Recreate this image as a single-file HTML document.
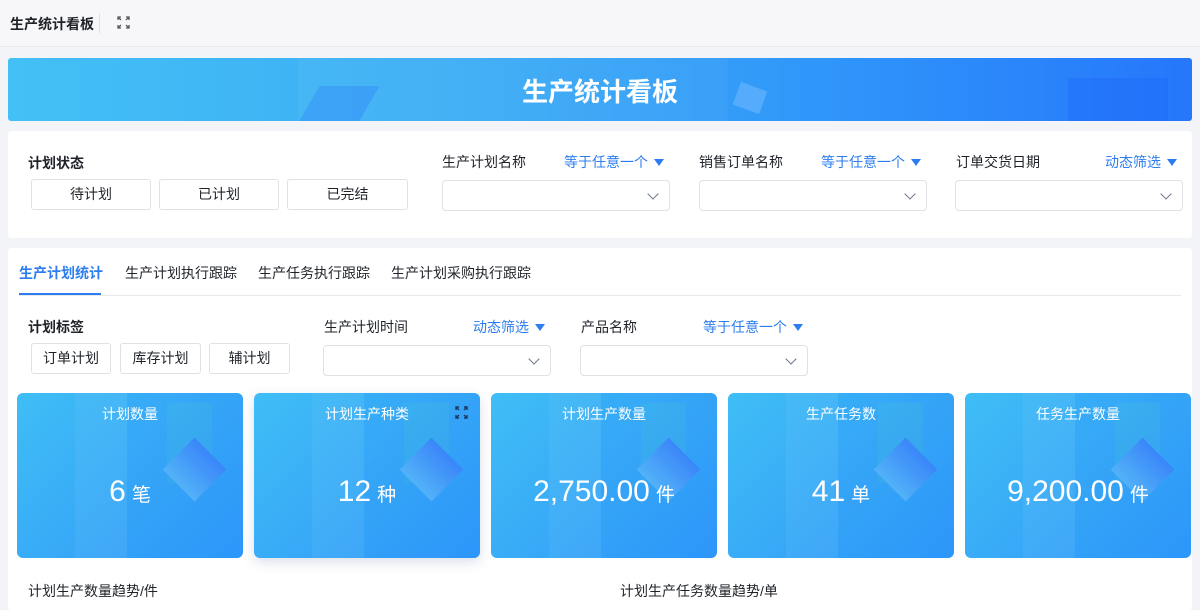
<!DOCTYPE html>
<html><head><meta charset="utf-8"><style>
*{box-sizing:border-box;margin:0;padding:0}
html,body{width:1200px;height:610px;overflow:hidden}
body{background:#f3f4f8;font-family:"Liberation Sans","Noto Sans CJK SC",sans-serif;color:#1f2329;position:relative}
.abs{position:absolute}
.hdr{left:0;top:0;width:1200px;height:47px;background:#f7f7fa;border-bottom:1px solid #e8e9ee}
.banner{left:8px;top:58px;width:1184px;height:63px;border-radius:3px;background:linear-gradient(90deg,#43c0f5 0%,#3cacf5 40%,#2f95fa 70%,#2677fb 100%);overflow:hidden}
.panel{background:#fff;border-radius:3px}
.lbl{font-size:14px;color:#1f2329}
.blue{color:#2d7df0;font-size:14px}
.btn{border:1px solid #dfe1e6;border-radius:3px;background:#fff;font-size:14px;text-align:center;color:#1f2329}
.sel{border:1px solid #dfe1e6;border-radius:4px;background:#fff;height:31px}
.sel:after{content:"";position:absolute;right:12px;top:9px;width:7px;height:7px;border-right:1.5px solid #6a7588;border-bottom:1.5px solid #6a7588;transform:rotate(45deg)}
.tri{display:inline-block;width:0;height:0;border-left:5px solid transparent;border-right:5px solid transparent;border-top:7px solid #2d7df0;margin-left:6px;vertical-align:1px}
.card{top:393px;width:226px;height:165px;border-radius:6px;overflow:hidden;background:linear-gradient(135deg,#3fbef6 0%,#38aaf7 50%,#2f98fb 100%);color:#fff;text-align:center}
.card .t{position:absolute;top:11px;left:0;width:100%;font-size:14px}
.card .v{position:absolute;top:82px;left:0;width:100%;font-size:30px}
.card .v span{font-size:19px;margin-left:6px}
.dia{position:absolute;left:155px;top:54px;width:45px;height:45px;transform:rotate(45deg);background:linear-gradient(180deg,#3a86f9,#52b2f8)}
.sh1{position:absolute;left:58px;top:0;width:52px;height:165px;background:rgba(255,255,255,.05)}
.sh3{position:absolute;left:110px;top:0;width:116px;height:165px;background:rgba(30,140,250,.12)}
.sh4{position:absolute;left:150px;top:10px;width:45px;height:80px;background:rgba(80,210,200,.15)}
.tab{top:263px;font-size:14px}
</style></head><body>
<div class="abs hdr"></div>
<div class="abs" style="left:10px;top:14px;font-size:14px;font-weight:bold">生产统计看板</div>
<div class="abs" style="left:99px;top:13px;width:1px;height:20px;background:#e0e2e8"></div>
<svg class="abs" style="left:117px;top:16px" width="13" height="13" viewBox="0 0 13 13" fill="none" stroke="#555" stroke-width="1.3"><path d="M1 4V1h3M9 1h3v3M12 9v3H9M4 12H1V9M1 1l3 3M12 1L9 4M12 12L9 9M1 12l3-3"/></svg>

<div class="abs banner">
<div class="abs" style="left:290px;top:0;width:430px;height:63px;background:rgba(255,255,255,.04)"></div>
<div class="abs" style="left:300px;top:28px;width:60px;height:40px;background:rgba(40,120,250,.3);transform:skewX(-30deg)"></div>
<div class="abs" style="left:728px;top:28px;width:28px;height:24px;background:rgba(120,190,255,.5);transform:rotate(20deg)"></div>
<div class="abs" style="left:1060px;top:20px;width:100px;height:60px;background:rgba(30,100,250,.35)"></div>
<div class="abs" style="left:0;top:14px;width:1184px;text-align:center;color:#fff;font-size:26px;font-weight:bold">生产统计看板</div>
</div>

<div class="abs panel" style="left:8px;top:131px;width:1184px;height:107px"></div>
<div class="abs lbl" style="left:28px;top:153px;font-weight:bold">计划状态</div>
<div class="abs btn" style="left:31px;top:179px;width:120px;height:31px;line-height:29px">待计划</div>
<div class="abs btn" style="left:159px;top:179px;width:120px;height:31px;line-height:29px">已计划</div>
<div class="abs btn" style="left:287px;top:179px;width:121px;height:31px;line-height:29px">已完结</div>
<div class="abs lbl" style="left:442px;top:152px">生产计划名称</div>
<div class="abs blue" style="left:564px;top:152px">等于任意一个<i class="tri"></i></div>
<div class="abs sel" style="left:442px;top:180px;width:228px"></div>
<div class="abs lbl" style="left:699px;top:152px">销售订单名称</div>
<div class="abs blue" style="left:821px;top:152px">等于任意一个<i class="tri"></i></div>
<div class="abs sel" style="left:699px;top:180px;width:228px"></div>
<div class="abs lbl" style="left:956px;top:152px">订单交货日期</div>
<div class="abs blue" style="left:1105px;top:152px">动态筛选<i class="tri"></i></div>
<div class="abs sel" style="left:955px;top:180px;width:228px"></div>

<div class="abs panel" style="left:8px;top:248px;width:1184px;height:362px"></div>
<div class="abs tab" style="left:19px;color:#2d7df0;font-weight:bold">生产计划统计</div>
<div class="abs tab" style="left:125px">生产计划执行跟踪</div>
<div class="abs tab" style="left:258px">生产任务执行跟踪</div>
<div class="abs tab" style="left:391px">生产计划采购执行跟踪</div>
<div class="abs" style="left:19px;top:295px;width:1162px;height:1px;background:#e6e8ec"></div>
<div class="abs" style="left:19px;top:293px;width:82px;height:2px;background:#2d7df0"></div>

<div class="abs lbl" style="left:28px;top:317px;font-weight:bold">计划标签</div>
<div class="abs btn" style="left:31px;top:343px;width:80px;height:31px;line-height:29px">订单计划</div>
<div class="abs btn" style="left:120px;top:343px;width:81px;height:31px;line-height:29px">库存计划</div>
<div class="abs btn" style="left:209px;top:343px;width:81px;height:31px;line-height:29px">辅计划</div>
<div class="abs lbl" style="left:324px;top:317px">生产计划时间</div>
<div class="abs blue" style="left:473px;top:317px">动态筛选<i class="tri"></i></div>
<div class="abs sel" style="left:323px;top:345px;width:228px"></div>
<div class="abs lbl" style="left:581px;top:317px">产品名称</div>
<div class="abs blue" style="left:703px;top:317px">等于任意一个<i class="tri"></i></div>
<div class="abs sel" style="left:580px;top:345px;width:228px"></div>

<div class="abs card" style="left:17px"><div class="sh1"></div><div class="sh3"></div><div class="sh4"></div><div class="dia"></div><div class="t">计划数量</div><div class="v">6<span>笔</span></div></div>
<div class="abs card" style="left:254px;box-shadow:0 4px 12px rgba(60,80,140,.18)"><div class="sh1"></div><div class="sh3"></div><div class="sh4"></div><div class="dia"></div><div class="t">计划生产种类</div><div class="v">12<span>种</span></div>
<svg style="position:absolute;left:201px;top:13px" width="13" height="13" viewBox="0 0 13 13" fill="none" stroke="#1d3a66" stroke-width="1.4"><path d="M1 4V1h3M9 1h3v3M12 9v3H9M4 12H1V9M1 1l3 3M12 1L9 4M12 12L9 9M1 12l3-3"/></svg></div>
<div class="abs card" style="left:491px"><div class="sh1"></div><div class="sh3"></div><div class="sh4"></div><div class="dia"></div><div class="t">计划生产数量</div><div class="v">2,750.00<span>件</span></div></div>
<div class="abs card" style="left:728px"><div class="sh1"></div><div class="sh3"></div><div class="sh4"></div><div class="dia"></div><div class="t">生产任务数</div><div class="v">41<span>单</span></div></div>
<div class="abs card" style="left:965px"><div class="sh1"></div><div class="sh3"></div><div class="sh4"></div><div class="dia"></div><div class="t">任务生产数量</div><div class="v">9,200.00<span>件</span></div></div>

<div class="abs lbl" style="left:28px;top:581px">计划生产数量趋势/件</div>
<div class="abs lbl" style="left:620px;top:581px">计划生产任务数量趋势/单</div>
</body></html>
